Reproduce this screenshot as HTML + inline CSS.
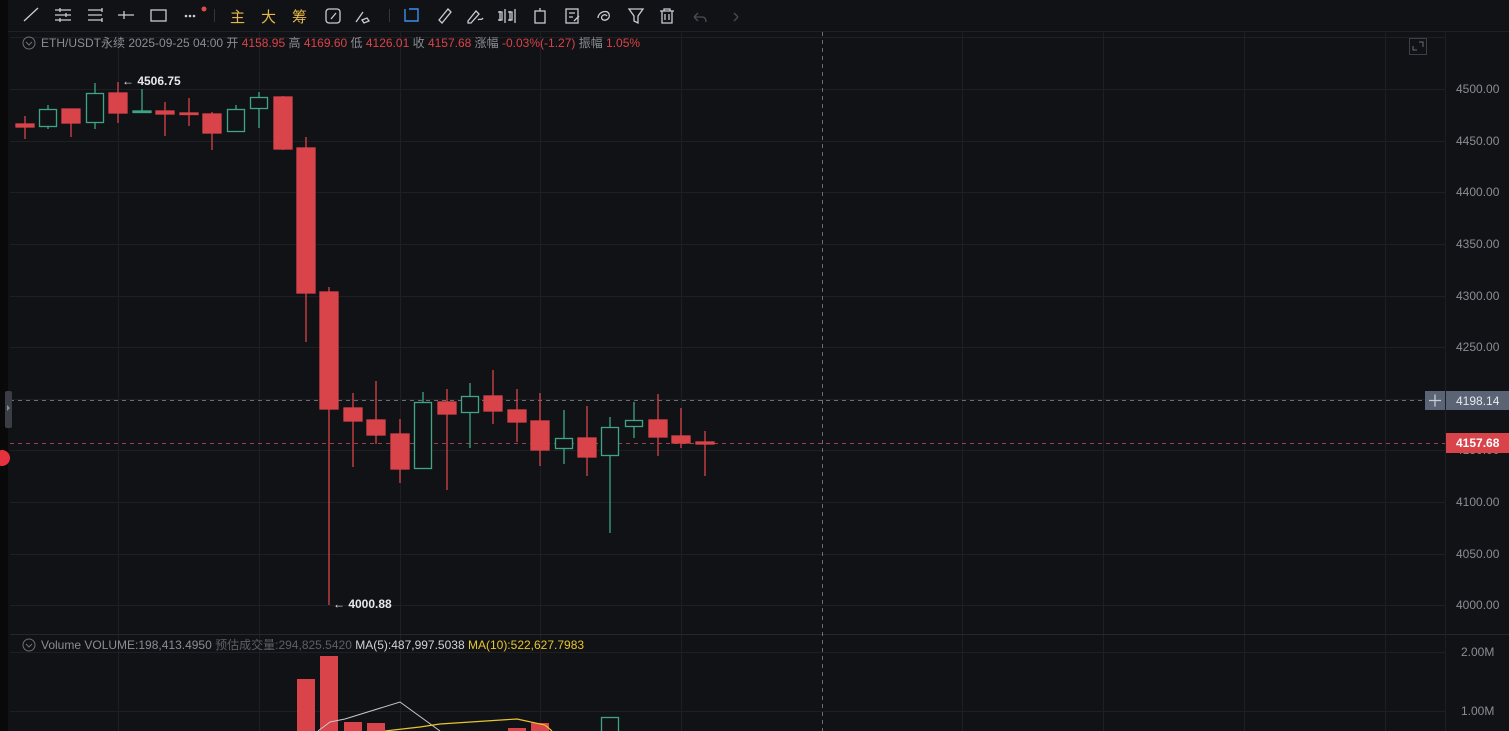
<!DOCTYPE html>
<html><head><meta charset="utf-8"><style>
html,body{margin:0;padding:0;background:#101114;width:1509px;height:731px;overflow:hidden;font-family:"Liberation Sans","Noto Sans CJK SC",sans-serif}
svg text{font-family:"Liberation Sans","Noto Sans CJK SC",sans-serif}
</style></head><body>
<svg width="1509" height="731" xmlns="http://www.w3.org/2000/svg">
<rect width="1509" height="731" fill="#111215"/>
<rect x="0" y="0" width="1509" height="31" fill="#111215"/>
<line x1="0" y1="31.5" x2="1509" y2="31.5" stroke="#1f2126"/>
<rect x="0" y="0" width="8" height="731" fill="#09090a"/>
<!-- toolbar icons -->
<g stroke="#c9ccd2" stroke-width="1.3" fill="none">
<line x1="24" y1="21" x2="38" y2="8"/>
<path d="M55 10h16M55 15h16M55 20h16M60 8v4M66 13v4M60 18v4"/>
<path d="M88 10h14M88 15h14M88 20h14M102 8v4M102 18v4"/>
<path d="M118 15h16M124 11v8"/>
<rect x="151" y="10" width="15" height="11"/>
</g>
<g fill="#c9ccd2"><circle cx="186" cy="16" r="1.3"/><circle cx="190" cy="16" r="1.3"/><circle cx="194" cy="16" r="1.3"/></g>
<circle cx="204" cy="9" r="2.5" fill="#e04a4a"/>
<line x1="214.5" y1="9" x2="214.5" y2="22" stroke="#33363c"/>
<text x="230" y="22" font-size="15" fill="#e6b84a">主</text>
<text x="261" y="22" font-size="15" fill="#e6b84a">大</text>
<text x="292" y="22" font-size="15" fill="#e6b84a">筹</text>
<g stroke="#c9ccd2" stroke-width="1.3" fill="none">
<rect x="326" y="9" width="14" height="14" rx="3"/><path d="M331 19l5-6"/>
<path d="M356 22l7-10M362 20l5-2 2 3-5 2z"/>
</g>
<line x1="389.5" y1="9" x2="389.5" y2="22" stroke="#33363c"/>
<g stroke="#3c8ef0" stroke-width="1.4" fill="none"><path d="M405 9v12h13V12M409 9h9v8"/></g>
<g stroke="#c9ccd2" stroke-width="1.3" fill="none">
<path d="M439 20l9-11 3 3-9 11z"/>
<path d="M468 21l8-10 3 3-8 9h-3zM478 20c2-2 3 1 5-2"/>
<path d="M500 11v10M505 9v14M510 11v10M515 9v14M498 12h4v8h-4M508 12h4v8h-4"/>
<rect x="535" y="11" width="10" height="12"/><path d="M540 8v3"/>
<rect x="566" y="9" width="12" height="14"/><path d="M569 13h6M569 17h4M574 21l5-5"/>
<path d="M598 18c0-6 9-9 11-4s-5 8-7 5 3-6 5-3"/>
<path d="M629 9h14l-5 7v7l-4-2v-5z"/>
<path d="M660 11h14M664 11V9h6v2M662 11v12h10V11M665 14v6M669 14v6"/>
</g>
<g stroke="#4a4d54" stroke-width="1.3" fill="none"><path d="M694 17l4-4M694 17l4 4M694 17h8c3 0 4 2 4 5"/><path d="M738 17l-4-4M738 17l-4 4"/></g>
<!-- grid -->
<g stroke="#1d1f23" stroke-width="1">
<line x1="10" y1="37.5" x2="1445" y2="37.5"/>
<line x1="10" y1="89.5" x2="1445" y2="89.5"/><line x1="10" y1="141.5" x2="1445" y2="141.5"/><line x1="10" y1="192.5" x2="1445" y2="192.5"/><line x1="10" y1="244.5" x2="1445" y2="244.5"/><line x1="10" y1="296.5" x2="1445" y2="296.5"/><line x1="10" y1="347.5" x2="1445" y2="347.5"/><line x1="10" y1="399.5" x2="1445" y2="399.5"/><line x1="10" y1="450.5" x2="1445" y2="450.5"/><line x1="10" y1="502.5" x2="1445" y2="502.5"/><line x1="10" y1="554.5" x2="1445" y2="554.5"/><line x1="10" y1="605.5" x2="1445" y2="605.5"/>
<line x1="10" y1="652.5" x2="1445" y2="652.5"/><line x1="10" y1="711.5" x2="1445" y2="711.5"/>
<line x1="118.5" y1="32" x2="118.5" y2="731"/><line x1="259.5" y1="32" x2="259.5" y2="731"/><line x1="400.5" y1="32" x2="400.5" y2="731"/><line x1="540.5" y1="32" x2="540.5" y2="731"/><line x1="681.5" y1="32" x2="681.5" y2="731"/><line x1="962.5" y1="32" x2="962.5" y2="731"/><line x1="1103.5" y1="32" x2="1103.5" y2="731"/><line x1="1244.5" y1="32" x2="1244.5" y2="731"/><line x1="1385.5" y1="32" x2="1385.5" y2="731"/>
</g>
<line x1="10" y1="634.5" x2="1509" y2="634.5" stroke="#25272c"/>
<line x1="1445.5" y1="32" x2="1445.5" y2="731" stroke="#1d1f23"/>
<!-- crosshair -->
<line x1="822.5" y1="32" x2="822.5" y2="731" stroke="#6a6d73" stroke-dasharray="4 4"/>
<line x1="10" y1="400.5" x2="1425" y2="400.5" stroke="#6a6d73" stroke-dasharray="4 4"/>
<line x1="10" y1="443.5" x2="1445" y2="443.5" stroke="#a0404a" stroke-dasharray="4 4"/>
<!-- candles -->
<g id="c" stroke-width="1.3">
<g stroke="#d9434a" fill="#d9434a">
<line x1="25" y1="116" x2="25" y2="139"/><rect x="16" y="124" width="18" height="3"/>
<line x1="71" y1="109" x2="71" y2="137"/><rect x="62" y="109" width="18" height="14"/>
<line x1="118" y1="82" x2="118" y2="123"/><rect x="109" y="93" width="18" height="20"/>
<line x1="165" y1="102" x2="165" y2="136"/><rect x="156" y="111" width="18" height="3"/>
<line x1="189" y1="98" x2="189" y2="126"/><rect x="180" y="113" width="18" height="1.5"/>
<line x1="212" y1="112" x2="212" y2="150"/><rect x="203" y="114" width="18" height="19"/>
<line x1="283" y1="96" x2="283" y2="150"/><rect x="274" y="97" width="18" height="52"/>
<line x1="306" y1="137" x2="306" y2="342"/><rect x="297" y="148" width="18" height="145"/>
<line x1="329" y1="287" x2="329" y2="605"/><rect x="320" y="292" width="18" height="117"/>
<line x1="353" y1="393" x2="353" y2="467"/><rect x="344" y="408" width="18" height="13"/>
<line x1="376" y1="381" x2="376" y2="444"/><rect x="367" y="420" width="18" height="15"/>
<line x1="400" y1="419" x2="400" y2="483"/><rect x="391" y="434" width="18" height="35"/>
<line x1="447" y1="389" x2="447" y2="490"/><rect x="438" y="402" width="18" height="12"/>
<line x1="493" y1="370" x2="493" y2="424"/><rect x="484" y="396" width="18" height="15"/>
<line x1="517" y1="389" x2="517" y2="442"/><rect x="508" y="410" width="18" height="12"/>
<line x1="540" y1="393" x2="540" y2="466"/><rect x="531" y="421" width="18" height="29"/>
<line x1="587" y1="406" x2="587" y2="476"/><rect x="578" y="438" width="18" height="19"/>
<line x1="658" y1="394" x2="658" y2="456"/><rect x="649" y="420" width="18" height="17"/>
<line x1="681" y1="408" x2="681" y2="448"/><rect x="672" y="436" width="18" height="7"/>
<line x1="705" y1="431" x2="705" y2="476"/><rect x="696" y="442" width="18" height="2"/>
</g>
<g stroke="#3fa584" fill="#111215">
<line x1="48" y1="105" x2="48" y2="129"/><rect x="39.5" y="109.5" width="17" height="17"/>
<line x1="95" y1="83" x2="95" y2="129"/><rect x="86.5" y="93.5" width="17" height="29"/>
<line x1="142" y1="89" x2="142" y2="113"/><rect x="133" y="111" width="18" height="1.5" fill="#3fa584"/>
<line x1="236" y1="105" x2="236" y2="132"/><rect x="227.5" y="109.5" width="17" height="22"/>
<line x1="259" y1="92" x2="259" y2="128"/><rect x="250.5" y="97.5" width="17" height="11"/>
<line x1="423" y1="392" x2="423" y2="402"/><rect x="414.5" y="402.5" width="17" height="66"/>
<line x1="470" y1="383" x2="470" y2="448"/><rect x="461.5" y="396.5" width="17" height="16"/>
<line x1="564" y1="410" x2="564" y2="464"/><rect x="555.5" y="438.5" width="17" height="10"/>
<line x1="610" y1="417" x2="610" y2="533"/><rect x="601.5" y="427.5" width="17" height="28"/>
<line x1="634" y1="402" x2="634" y2="438"/><rect x="625.5" y="420.5" width="17" height="6"/>
</g>
</g>
<!-- hi/lo labels -->
<text x="122" y="85" font-size="12" font-weight="bold" fill="#e8e8ea">← 4506.75</text>
<text x="333" y="608" font-size="12" font-weight="bold" fill="#e8e8ea">← 4000.88</text>
<!-- volume -->
<g fill="#d9434a">
<rect x="297" y="679" width="18" height="60"/><rect x="320" y="656" width="18" height="80"/>
<rect x="344" y="722" width="18" height="20"/><rect x="367" y="723" width="18" height="20"/>
<rect x="508" y="728" width="18" height="10"/><rect x="531" y="723" width="18" height="15"/>
</g>
<rect x="601.5" y="717.5" width="17" height="20" fill="none" stroke="#3fa584" stroke-width="1.3"/>
<polyline points="318,731 330,722 345,719 400,702 440,731" fill="none" stroke="#c8c8cc" stroke-width="1"/>
<polyline points="385,731 420,727 440,724 517,719 545,725 552,731" fill="none" stroke="#e8c62e" stroke-width="1.2"/>
<!-- headers -->
<circle cx="29" cy="43" r="6" fill="none" stroke="#6c6f75"/><path d="M26 42l3 3 3-3" fill="none" stroke="#6c6f75"/>
<text x="41" y="47" font-size="12" fill="#8a8d93">ETH/USDT永续 2025-09-25 04:00 开 <tspan fill="#d9434a">4158.95</tspan> 高 <tspan fill="#d9434a">4169.60</tspan> 低 <tspan fill="#d9434a">4126.01</tspan> 收 <tspan fill="#d9434a">4157.68</tspan> 涨幅 <tspan fill="#d9434a">-0.03%(-1.27)</tspan> 振幅 <tspan fill="#d9434a">1.05%</tspan></text>
<circle cx="29" cy="645" r="6" fill="none" stroke="#6c6f75"/><path d="M26 644l3 3 3-3" fill="none" stroke="#6c6f75"/>
<text x="41" y="649" font-size="12" fill="#8a8d93">Volume  VOLUME:198,413.4950  <tspan fill="#5c5f65">预估成交量:294,825.5420</tspan>  <tspan fill="#d0d2d6">MA(5):487,997.5038</tspan>  <tspan fill="#e8c62e">MA(10):522,627.7983</tspan></text>
<!-- expand icon -->
<rect x="1409.5" y="38.5" width="17" height="16" fill="none" stroke="#3c3f47"/>
<path d="M1413 46v4h4M1423 47v-5h-4" fill="none" stroke="#6c6f75"/>
<!-- axis labels -->
<g font-size="12" fill="#8a8d93">
<text x="1456" y="93">4500.00</text><text x="1456" y="145">4450.00</text><text x="1456" y="196">4400.00</text><text x="1456" y="248">4350.00</text><text x="1456" y="300">4300.00</text><text x="1456" y="351">4250.00</text><text x="1456" y="454">4150.00</text><text x="1456" y="506">4100.00</text><text x="1456" y="558">4050.00</text><text x="1456" y="609">4000.00</text>
<text x="1461" y="656">2.00M</text><text x="1461" y="715">1.00M</text>
</g>
<rect x="1425" y="391" width="20" height="19" fill="#5b6474"/><path d="M1429 400.5h12M1435 394.5v12" stroke="#c8ccd4" stroke-width="1.3"/>
<rect x="1446" y="391" width="63" height="19" fill="#5b6474"/>
<text x="1456" y="405" font-size="12" fill="#e6e8ec">4198.14</text>
<rect x="1446" y="433" width="63" height="20" fill="#d9434a"/>
<text x="1456" y="447" font-size="12" font-weight="bold" fill="#ffffff">4157.68</text>
<!-- left handle + dot -->
<rect x="5" y="391" width="7" height="37" rx="2" fill="#3a3d44"/><path d="M7 405l3 3-3 3z" fill="#8a8d93"/>
<circle cx="2" cy="458" r="8" fill="#e8313e"/>
</svg>
</body></html>
